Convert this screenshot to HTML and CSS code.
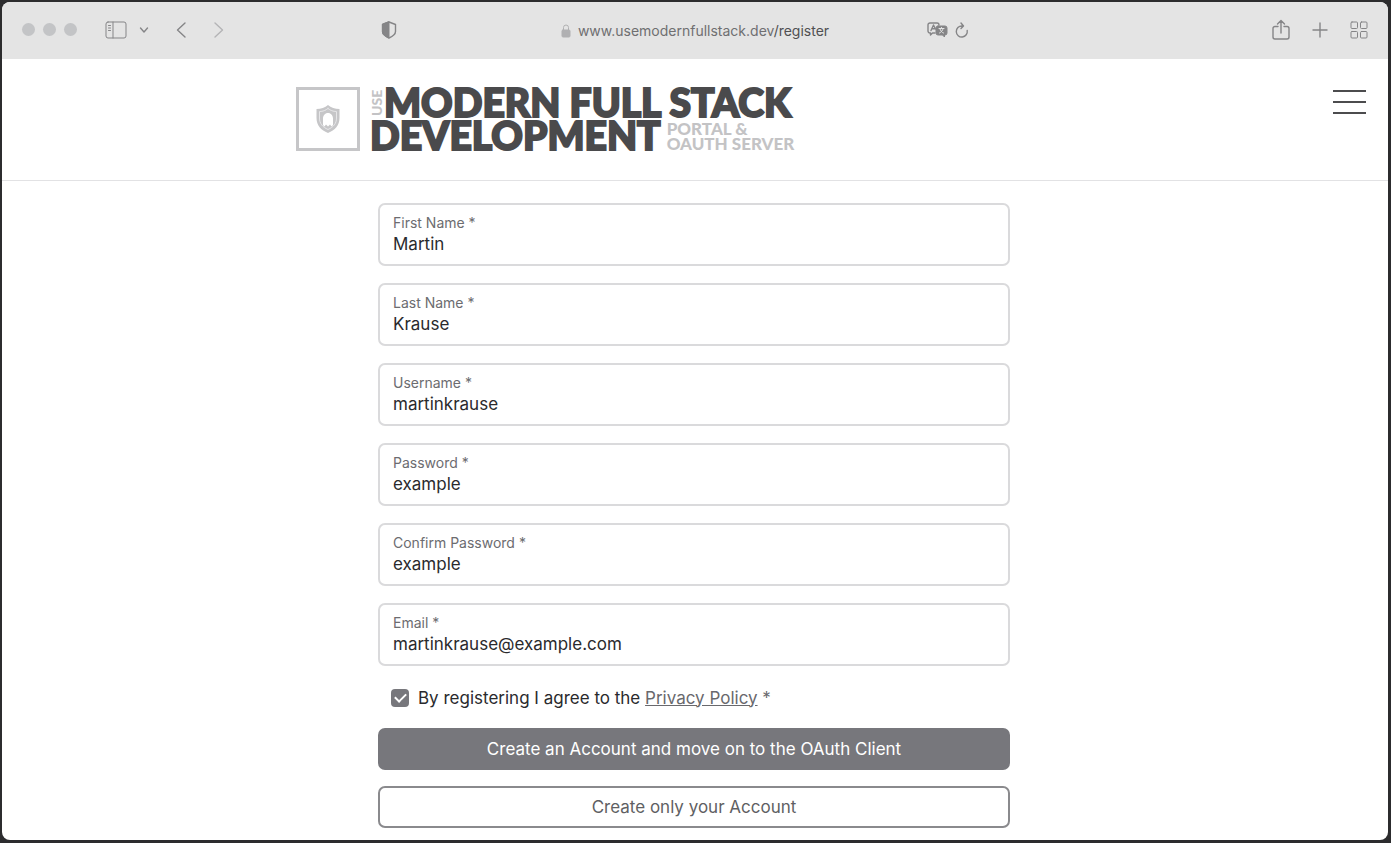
FILE: index.html
```html
<!DOCTYPE html>
<html lang="en">
<head>
<meta charset="utf-8">
<title>Register</title>
<link rel="stylesheet" href="styles.css">
</head>
<body>
<div class="window">
  <div class="toolbar">
    <div class="tools tools-left">
      <div class="lights"><span class="light"></span><span class="light"></span><span class="light"></span></div>
      <button class="tool sidebar" aria-label="Show sidebar"><svg width="22" height="18" viewBox="0 0 22 18"><rect x="1" y="1" width="20" height="16" rx="2"/><path d="M8 1v16M3.500 4.500h2M3.500 7h2M3.500 9.500h2"/></svg></button>
      <button class="tool menu-arrow" aria-label="Tab groups"><svg width="10" height="8" viewBox="0 0 10 8"><path class="bold" d="M1.500 2L5 6l3.500-4"/></svg></button>
      <button class="tool back" aria-label="Back"><svg width="10" height="18" viewBox="0 0 10 18"><path class="bold" d="M9 2L1.500 9 9 16"/></svg></button>
      <button class="tool forward" aria-label="Forward"><svg width="10" height="18" viewBox="0 0 10 18"><path class="bold" d="M1 2l7.500 7L1 16"/></svg></button>
      <button class="tool shield" aria-label="Privacy report"><svg width="16" height="18" viewBox="0 0 16 18"><path class="bold" d="M8 1l6.500 2.500v7c0 3-3 5-6.500 6.500C4.500 15.500 1.500 13.500 1.500 10.500v-7z"/><path class="solid" d="M8 1v16C4.500 15.500 1.500 13.500 1.500 10.500v-7z"/></svg></button>
    </div>
    <div class="address">
      <svg class="lock" width="10" height="14" viewBox="0 0 10 14"><path d="M2.500 6V3.500a2.500 2.500 0 0 1 5 0V6"/><rect class="solid" x="1" y="6" width="8" height="7" rx="1"/></svg>
      <span class="url">www.usemodernfullstack.dev<span class="path">/register</span></span>
    </div>
    <div class="tools tools-right">
      <button class="tool" aria-label="Translate"><svg width="21" height="16" viewBox="0 0 21 16"><path class="bold" d="M8 11H5.500L3.500 13V11H3a2 2 0 0 1-2-2V3a2 2 0 0 1 2-2h7a2 2 0 0 1 2 2M4 8.500l2.500-5.500L8.500 7M5 6.800h3"/><path class="solid" d="M11 4h7a2 2 0 0 1 2 2v5a2 2 0 0 1-2 2h-.5v2l-2-2H11a2 2 0 0 1-2-2V6a2 2 0 0 1 2-2z"/><path class="knockout" d="M12 6.500h5M14.500 5.500v1M12.500 11c2-1 3.200-2.500 3.500-4.500M13 7c.5 2 2 3.500 3.500 4"/></svg></button>
      <button class="tool reload" aria-label="Reload"><svg width="14" height="16" viewBox="0 0 14 16"><path class="bold" d="M12.200 8.500A5.500 5.500 0 1 1 7 4h1M6 1l2.500 3L6 6.500"/></svg></button>
      <button class="tool share" aria-label="Share"><svg width="18" height="22" viewBox="0 0 18 22"><path class="bold" d="M6 7.500H3a2 2 0 0 0-2 2V18a2 2 0 0 0 2 2h12a2 2 0 0 0 2-2V9.500a2 2 0 0 0-2-2h-3M9 14V1.500M5.500 5L9 1.500 12.500 5"/></svg></button>
      <button class="tool" aria-label="New tab"><svg width="16" height="16" viewBox="0 0 16 16"><path class="bold" d="M8 1v14M1 8h14"/></svg></button>
      <button class="tool tabs" aria-label="Tab overview"><svg width="18" height="18" viewBox="0 0 18 18"><rect x="1" y="1" width="6.500" height="6.500" rx="1"/><rect x="10.500" y="1" width="6.500" height="6.500" rx="1"/><rect x="1" y="10.500" width="6.500" height="6.500" rx="1"/><rect x="10.500" y="10.500" width="6.500" height="6.500" rx="1"/></svg></button>
    </div>
  </div>

  <header class="header">
    <a class="logo" href="#">
      <span class="emblem"><svg width="26" height="30" viewBox="0 0 26 30"><path class="plate" fill-rule="evenodd" d="M13 1C10 3.500 6 5 1.500 5v9c0 7.500 4.500 12 11.500 15 7-3 11.500-7.500 11.500-15V5C20 5 16 3.500 13 1zM9.500 22.500L8 21v-6.500c0-3 2-5.500 5-5.500s5 2.500 5 5.500V21l-1.500 1.500L15 20.500l-2 2-2-2z"/><path class="groove" d="M13 4.500C10.500 6.500 8 7.500 4.500 7.500V14c0 5.500 3 9 8.500 11.500 5.500-2.500 8.500-6 8.500-11.500V7.500C18 7.500 15.500 6.500 13 4.500z"/></svg></span>
      <span class="wordmark">
        <span class="line"><span class="use">USE</span><span class="big">MODERN FULL STACK</span></span>
        <span class="line"><span class="big">DEVELOPMENT</span><span class="small">PORTAL &amp;<br>OAUTH SERVER</span></span>
      </span>
    </a>
    <button class="burger" aria-label="Menu"><span></span><span></span><span></span></button>
  </header>

  <main class="main">
    <form class="form">
      <div class="field"><label for="first">First Name *</label><input id="first" type="text" value="Martin"></div>
      <div class="field"><label for="last">Last Name *</label><input id="last" type="text" value="Krause"></div>
      <div class="field"><label for="user">Username *</label><input id="user" type="text" value="martinkrause"></div>
      <div class="field"><label for="pass">Password *</label><input id="pass" type="text" value="example"></div>
      <div class="field"><label for="confirm">Confirm Password *</label><input id="confirm" type="text" value="example"></div>
      <div class="field"><label for="email">Email *</label><input id="email" type="email" value="martinkrause@example.com"></div>
      <div class="agree"><input id="agree" type="checkbox" checked><label for="agree">By registering I agree to the <a href="#">Privacy Policy</a> <span class="star">*</span></label></div>
      <button class="button primary" type="submit">Create an Account and move on to the OAuth Client</button>
      <button class="button outline" type="button">Create only your Account</button>
    </form>
  </main>
</div>
</body>
</html>
```
FILE: styles.css
```css
* { box-sizing: border-box; }
body {
  margin: 0;
  min-height: 100vh;
  padding: 2px 3px 3px 2px;
  display: flex;
  background: #2c2c2e;
  font-family: Inter, "Liberation Sans", sans-serif;
  color: #2a2a2d;
}
button { font: inherit; color: inherit; background: none; border: 0; padding: 0; cursor: pointer; }
svg { display: block; fill: none; stroke: currentColor; stroke-linecap: round; stroke-linejoin: round; }
.bold { stroke-width: 1.4; }
.solid { fill: currentColor; }
.knockout { stroke: #e4e4e4; }

.window { flex: 1; min-width: 0; background: #fff; border-radius: 8px; overflow: hidden; }

.toolbar {
  display: grid;
  grid-template-columns: 1fr auto 1fr;
  align-items: center;
  height: 57px;
  padding: 0 20px;
  background: #e4e4e4;
  color: #858587;
}
.tools { display: flex; align-items: center; padding-bottom: 2px; }
.lights { display: flex; gap: 8px; }
.light { width: 13px; height: 13px; border-radius: 50%; background: #c3c4c6; }
.sidebar { margin-left: 28px; }
.menu-arrow { margin-left: 12px; }
.back { margin-left: 27px; }
.forward { margin-left: 28px; color: #b4b4b6; }
.shield { margin-left: 157px; }
.address { display: flex; align-items: center; gap: 7px; font-size: 14px; line-height: 20px; }
.lock { color: #b0b0b2; }
.url { color: #6f6f71; }
.path { color: #505052; }
.tools-right { padding-left: 98px; }
.reload { margin-left: 7px; }
.share { margin-left: auto; }
.share + .tool { margin-left: 22px; }
.tabs { margin-left: 22px; }

.header {
  display: flex;
  justify-content: space-between;
  align-items: flex-start;
  height: 122px;
  padding: 28px 22px 0 calc(50% - 399px);
  border-bottom: 1px solid #e2e2e4;
}
.logo { display: flex; gap: 10px; color: #4a4a4c; text-decoration: none; font-family: Lato, "Liberation Sans", sans-serif; font-weight: 900; }
.emblem { width: 64px; height: 64px; border: 3px solid #c6c6c8; display: grid; place-items: center; }
.plate { stroke: none; fill: #c6c6c8; }
.groove { stroke: #e6e6e8; }
.wordmark { display: flex; flex-direction: column; }
.line { display: flex; height: 33px; }
.use { writing-mode: vertical-rl; transform: rotate(180deg); font-size: 14px; line-height: 14px; color: #c3c3c5; height: 31px; text-align: center; }
.big { font-size: 39px; line-height: 31px; white-space: nowrap; -webkit-text-stroke: 2px #4a4a4c; }
.small { margin-left: 6px; padding-top: 1px; font-size: 17px; line-height: 15px; color: #c3c3c5; white-space: nowrap; }
.burger { display: flex; flex-direction: column; gap: 9px; width: 33px; padding-top: 3px; }
.burger span { height: 2px; background: #4c4c4e; }

.main { padding: 22px 17px 12px 15px; }
.form { display: flex; flex-direction: column; max-width: 632px; margin: 0 auto; }
.field {
  height: 63px;
  margin-bottom: 17px;
  padding: 9px 13px;
  border: 2px solid #dadadc;
  border-radius: 7px;
  display: flex;
  flex-direction: column;
  gap: 1px;
}
.field label { font-size: 14px; line-height: 18px; color: #6c6c70; }
.field input { border: 0; outline: 0; padding: 0; background: none; font: inherit; font-size: 17px; line-height: 22px; height: 22px; color: inherit; }
.agree { display: flex; align-items: center; gap: 9px; height: 29px; padding-left: 13px; font-size: 17px; line-height: 24px; }
.agree input {
  appearance: none;
  width: 18px;
  height: 18px;
  margin: 0;
  border-radius: 4px;
  display: grid;
  place-items: center;
  background: #77777c;
}
.agree input:checked::before { content: ""; width: 9px; height: 5px; border: solid #fff; border-width: 0 0 2px 2px; transform: rotate(-45deg); margin-bottom: 3px; }
.agree a, .star { color: #69696d; }
.button { height: 42px; border-radius: 7px; font-size: 17px; line-height: 24px; }
.primary { margin-top: 16px; background: #77777c; color: #fff; }
.outline { margin-top: 16px; border: 2px solid #8a8a8d; color: #5f5f63; }
```
